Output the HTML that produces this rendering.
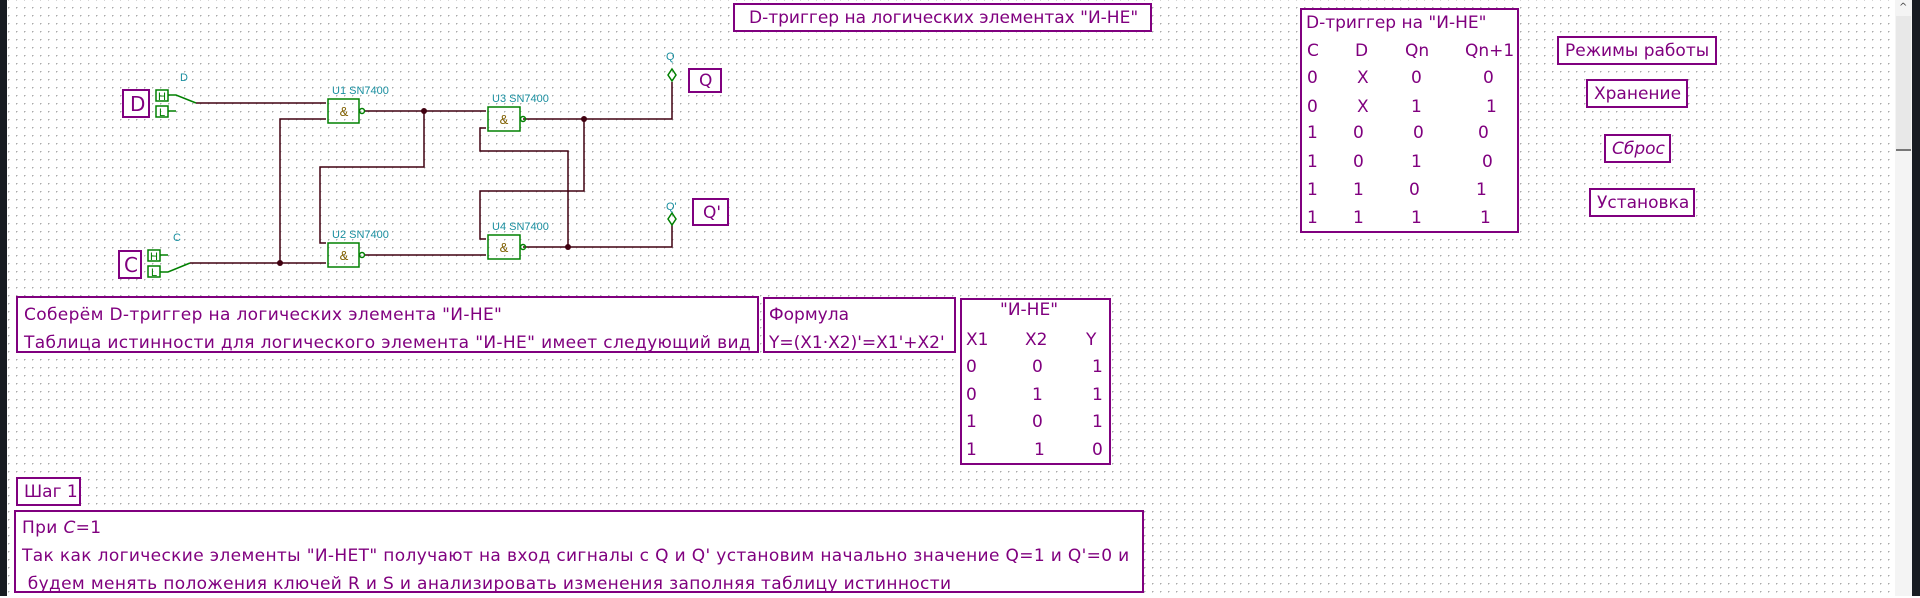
<!DOCTYPE html>
<html><head><meta charset="utf-8"><style>
html,body{margin:0;padding:0}
body{width:1920px;height:596px;position:relative;overflow:hidden;background:#fff;
font-family:"DejaVu Sans","Liberation Sans",sans-serif;color:#80007f}
#grid{position:absolute;left:8px;top:0;width:1887px;height:596px;
background-image:radial-gradient(circle at 0.5px 0.5px,#aaa 0.8px,transparent 1px);
background-size:8px 8px;background-position:0 7px}
.lb{position:absolute;left:0;top:0;width:7px;height:596px;background:#181c22}
.rb{position:absolute;left:1912px;top:0;width:8px;height:596px;background:#181c22}
.sb{position:absolute;left:1895px;top:0;width:17px;height:596px;background:#f4f4f4}
.th{position:absolute;left:1896px;top:16px;width:15px;height:133px;background:#e8e8e8;border-bottom:2px solid #777}
.bx{position:absolute;border:2px solid #80007f;background:#fff;box-sizing:border-box;font-size:17px;white-space:nowrap;line-height:20px}
.t{position:absolute;font-size:17px;white-space:nowrap;line-height:20px}
.ls{letter-spacing:0.35px}
</style></head><body>
<div id="grid"></div>
<div class="lb"></div><div class="sb"></div><div class="th"></div><div class="rb"></div>
<div style="position:absolute;left:1899px;top:2px;font-size:10px;color:#444">^</div>

<div class="bx" style="left:733px;top:3px;width:419px;height:29px;padding:3px 0 0 14px">D-триггер на логических элементах "И-НЕ"</div>

<svg style="position:absolute;left:0;top:0" width="760" height="300">
<g fill="none" stroke="#400010" stroke-width="1.5">
<path d="M196 103H326"/>
<path d="M365 111H486"/>
<path d="M523 119H672V82"/>
<path d="M326 119H280V263"/>
<path d="M190 263H326"/>
<path d="M424 111V167H320V243H326"/>
<path d="M365 255H486"/>
<path d="M486 239H480V191H584V119"/>
<path d="M486 128H480V151H568V247"/>
<path d="M523 247H672V225"/>
</g>
<g fill="#400010"><circle cx="424" cy="111" r="3"/><circle cx="584" cy="119" r="3"/><circle cx="280" cy="263" r="3"/><circle cx="568" cy="247" r="3"/></g>
<g fill="none" stroke="#008000" stroke-width="1.5">
<rect x="328" y="99" width="31" height="24"/><rect x="488" y="107" width="32" height="24"/>
<rect x="328" y="243" width="31" height="24"/><rect x="488" y="235" width="32" height="24"/>
<circle cx="362" cy="111" r="2.5"/><circle cx="523" cy="119" r="2.5"/><circle cx="362" cy="255" r="2.5"/><circle cx="523" cy="247" r="2.5"/>
<rect x="156" y="90" width="12" height="11"/><rect x="156" y="106" width="12" height="11"/>
<rect x="148" y="250" width="12" height="11"/><rect x="148" y="266" width="12" height="11"/>
<path d="M168 95H176L196 103"/><path d="M168 111H176"/>
<path d="M160 255H168"/><path d="M160 272H168L190 263"/>
<path d="M672 69L676 75L672 81L668 75Z"/><path d="M672 213L676 219L672 225L668 219Z"/>
</g>
<g font-family="Liberation Sans" font-size="11" fill="#008000" text-anchor="middle">
<text x="344" y="116" fill="#806000" font-size="13">&amp;</text><text x="504" y="124" fill="#806000" font-size="13">&amp;</text>
<text x="344" y="260" fill="#806000" font-size="13">&amp;</text><text x="504" y="252" fill="#806000" font-size="13">&amp;</text>
<text x="162" y="100">H</text><text x="162" y="116">L</text>
<text x="154" y="260">H</text><text x="154" y="276">L</text>
</g>
<g font-family="Liberation Sans" font-size="11" fill="#1a8fa0">
<text x="332" y="94">U1 SN7400</text><text x="492" y="102">U3 SN7400</text>
<text x="332" y="238">U2 SN7400</text><text x="492" y="230">U4 SN7400</text>
<text x="180" y="81">D</text><text x="173" y="241">C</text>
<text x="666" y="60">Q</text><text x="666" y="210">Q'</text>
</g>
</svg>
<div class="bx" style="left:122px;top:89px;width:28px;height:29px;font-size:20px;padding:3px 0 0 6px">D</div>
<div class="bx" style="left:118px;top:250px;width:24px;height:29px;font-size:20px;padding:3px 0 0 4px">C</div>
<div class="bx" style="left:688px;top:68px;width:34px;height:25px;padding:1px 0 0 9px">Q</div>
<div class="bx" style="left:692px;top:198px;width:37px;height:28px;padding:3px 0 0 9px">Q'</div>

<div class="bx" style="left:1300px;top:8px;width:219px;height:225px"></div>
<div class="t" style="left:1306px;top:13px">D-триггер на "И-НЕ"</div>
<div class="t" style="left:1307px;top:41px">C</div><div class="t" style="left:1355px;top:41px">D</div><div class="t" style="left:1405px;top:41px">Qn</div><div class="t" style="left:1465px;top:41px">Qn+1</div>
<div class="t" style="left:1307px;top:68px">0</div><div class="t" style="left:1357px;top:68px">X</div><div class="t" style="left:1411px;top:68px">0</div><div class="t" style="left:1483px;top:68px">0</div>
<div class="t" style="left:1307px;top:97px">0</div><div class="t" style="left:1357px;top:97px">X</div><div class="t" style="left:1411px;top:97px">1</div><div class="t" style="left:1486px;top:97px">1</div>
<div class="t" style="left:1307px;top:123px">1</div><div class="t" style="left:1353px;top:123px">0</div><div class="t" style="left:1413px;top:123px">0</div><div class="t" style="left:1478px;top:123px">0</div>
<div class="t" style="left:1307px;top:152px">1</div><div class="t" style="left:1353px;top:152px">0</div><div class="t" style="left:1411px;top:152px">1</div><div class="t" style="left:1482px;top:152px">0</div>
<div class="t" style="left:1307px;top:180px">1</div><div class="t" style="left:1353px;top:180px">1</div><div class="t" style="left:1409px;top:180px">0</div><div class="t" style="left:1476px;top:180px">1</div>
<div class="t" style="left:1307px;top:208px">1</div><div class="t" style="left:1353px;top:208px">1</div><div class="t" style="left:1411px;top:208px">1</div><div class="t" style="left:1480px;top:208px">1</div>

<div class="bx" style="left:1557px;top:36px;width:160px;height:29px;padding:3px 0 0 6px">Режимы работы</div>
<div class="bx" style="left:1586px;top:79px;width:102px;height:29px;padding:3px 0 0 6px">Хранение</div>
<div class="bx" style="left:1604px;top:134px;width:67px;height:29px;padding:3px 0 0 6px;font-style:italic">Сброс</div>
<div class="bx" style="left:1589px;top:188px;width:106px;height:29px;padding:3px 0 0 6px">Установка</div>

<div class="bx ls" style="left:16px;top:296px;width:743px;height:57px;padding:3px 0 0 6px;line-height:28px">Соберём D-триггер на логических элемента "И-НЕ"<br>Таблица истинности для логического элемента "И-НЕ" имеет следующий вид</div>
<div class="bx" style="left:763px;top:297px;width:193px;height:56px;padding:2px 0 0 4px;line-height:28px">Формула<br>Y=(X1·X2)'=X1'+X2'</div>
<div class="bx" style="left:960px;top:298px;width:151px;height:167px"></div>
<div class="t" style="left:1000px;top:300px">"И-НЕ"</div>
<div class="t" style="left:966px;top:330px">X1</div><div class="t" style="left:1025px;top:330px">X2</div><div class="t" style="left:1086px;top:330px">Y</div>
<div class="t" style="left:966px;top:357px">0</div><div class="t" style="left:1032px;top:357px">0</div><div class="t" style="left:1092px;top:357px">1</div>
<div class="t" style="left:966px;top:385px">0</div><div class="t" style="left:1032px;top:385px">1</div><div class="t" style="left:1092px;top:385px">1</div>
<div class="t" style="left:966px;top:412px">1</div><div class="t" style="left:1032px;top:412px">0</div><div class="t" style="left:1092px;top:412px">1</div>
<div class="t" style="left:966px;top:440px">1</div><div class="t" style="left:1034px;top:440px">1</div><div class="t" style="left:1092px;top:440px">0</div>

<div class="bx" style="left:16px;top:477px;width:65px;height:29px;padding:3px 0 0 6px">Шаг 1</div>
<div class="bx ls" style="left:14px;top:510px;width:1130px;height:83px;padding:2px 0 0 6px;line-height:28px">При <i>C</i>=1<br>Так как логические элементы "И-НЕТ" получают на вход сигналы с Q и Q' установим начально значение Q=1 и Q'=0 и<br>&nbsp;будем менять положения ключей R и S и анализировать изменения заполняя таблицу истинности</div>
</body></html>
